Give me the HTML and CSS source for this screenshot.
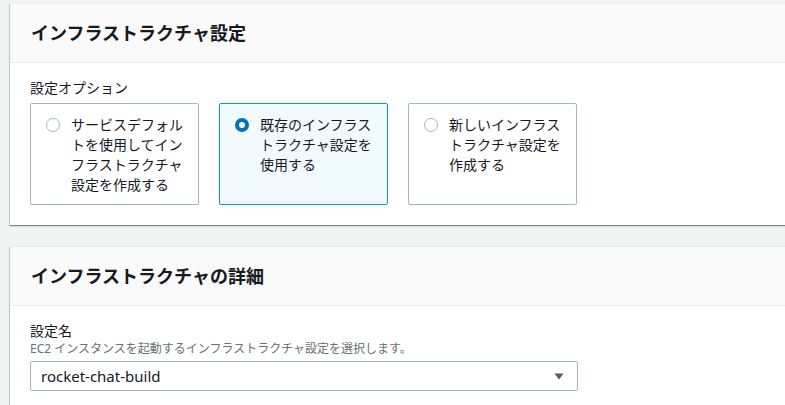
FILE: index.html
```html
<!DOCTYPE html>
<html lang="ja">
<head>
<meta charset="utf-8">
<link rel="stylesheet" href="styles.css">
</head>
<body>
<div class="page">
  <section class="panel">
    <header class="panel-header"><h2>インフラストラクチャ設定</h2></header>
    <div class="panel-body">
      <div class="label">設定オプション</div>
      <div class="tiles">
        <div class="tile">
          <span class="radio"></span>
          <span class="tile-text">サービスデフォルトを使用してインフラストラクチャ設定を作成する</span>
        </div>
        <div class="tile selected">
          <span class="radio checked"></span>
          <span class="tile-text">既存のインフラストラクチャ設定を使用する</span>
        </div>
        <div class="tile">
          <span class="radio"></span>
          <span class="tile-text">新しいインフラストラクチャ設定を作成する</span>
        </div>
      </div>
    </div>
  </section>
  <section class="panel">
    <header class="panel-header"><h2>インフラストラクチャの詳細</h2></header>
    <div class="panel-body panel-body-2">
      <div class="label">設定名</div>
      <div class="desc">EC2 インスタンスを起動するインフラストラクチャ設定を選択します。</div>
      <div class="select">
        <span class="select-value">rocket-chat-build</span>
        <svg class="caret" width="10" height="7" viewBox="0 0 10 7"><path d="M0.5 0.5 H9.5 L5 6.5 Z" fill="#545b64"/></svg>
      </div>
    </div>
  </section>
</div>
</body>
</html>
```
FILE: styles.css
```css
html, body {
  margin: 0;
  padding: 0;
  overflow: hidden;
  background: #f2f3f3;
}
body {
  font-family: "Noto Sans", "Noto Sans CJK JP", sans-serif;
  color: #16191f;
  font-size: 14px;
  line-height: 20px;
}
.page {
  padding: 3px 0 0 10px;
  display: flex;
  flex-direction: column;
  gap: 21px;
  width: 800px;
}
.panel {
  background: #fff;
  border-top: 1px solid #eaeded;
  box-shadow: 0 1px 1px 0 rgba(0,28,36,.3), 1px 1px 1px 0 rgba(0,28,36,.15), -1px 1px 1px 0 rgba(0,28,36,.15);
}
.panel-header {
  background: #fafafa;
  height: 58px;
  border-bottom: 1px solid #eaeded;
  display: flex;
  align-items: center;
  padding: 0 21px;
}
.panel-header h2 {
  margin: 0;
  font-size: 18px;
  font-weight: 700;
  line-height: 22px;
  color: #16191f;
}
.panel-body {
  padding: 15px 20px 20px 20px;
}
.label {
  font-size: 14px;
  line-height: 20px;
}
.tiles {
  display: flex;
  gap: 20px;
  margin-top: 5px;
}
.tile {
  box-sizing: border-box;
  width: 169px;
  height: 102px;
  border: 1px solid #aab7b8;
  border-radius: 2px;
  padding: 11px 13px 11px 15px;
  display: flex;
  align-items: flex-start;
  gap: 11px;
}
.tile.selected {
  border-color: #00a1c9;
  background: #f1faff;
}
.radio {
  flex: none;
  box-sizing: border-box;
  width: 14px;
  height: 14px;
  margin-top: 3px;
  border-radius: 50%;
  border: 1px solid #aab7b8;
  background: #fff;
}
.radio.checked {
  border: 4px solid #0073bb;
}
.tile-text {
  width: 114px;
  color: #16191f;
}
.desc {
  font-size: 12px;
  line-height: 16px;
  color: #687078;
}
.select {
  box-sizing: border-box;
  margin-top: 4px;
  width: 548px;
  height: 30px;
  border: 1px solid #aab7b8;
  border-radius: 2px;
  display: flex;
  align-items: center;
  justify-content: space-between;
  padding: 0 13px 0 10px;
  background: #fff;
}
.select-value {
  font-size: 15px;
}
.caret {
  display: block;
}
```
